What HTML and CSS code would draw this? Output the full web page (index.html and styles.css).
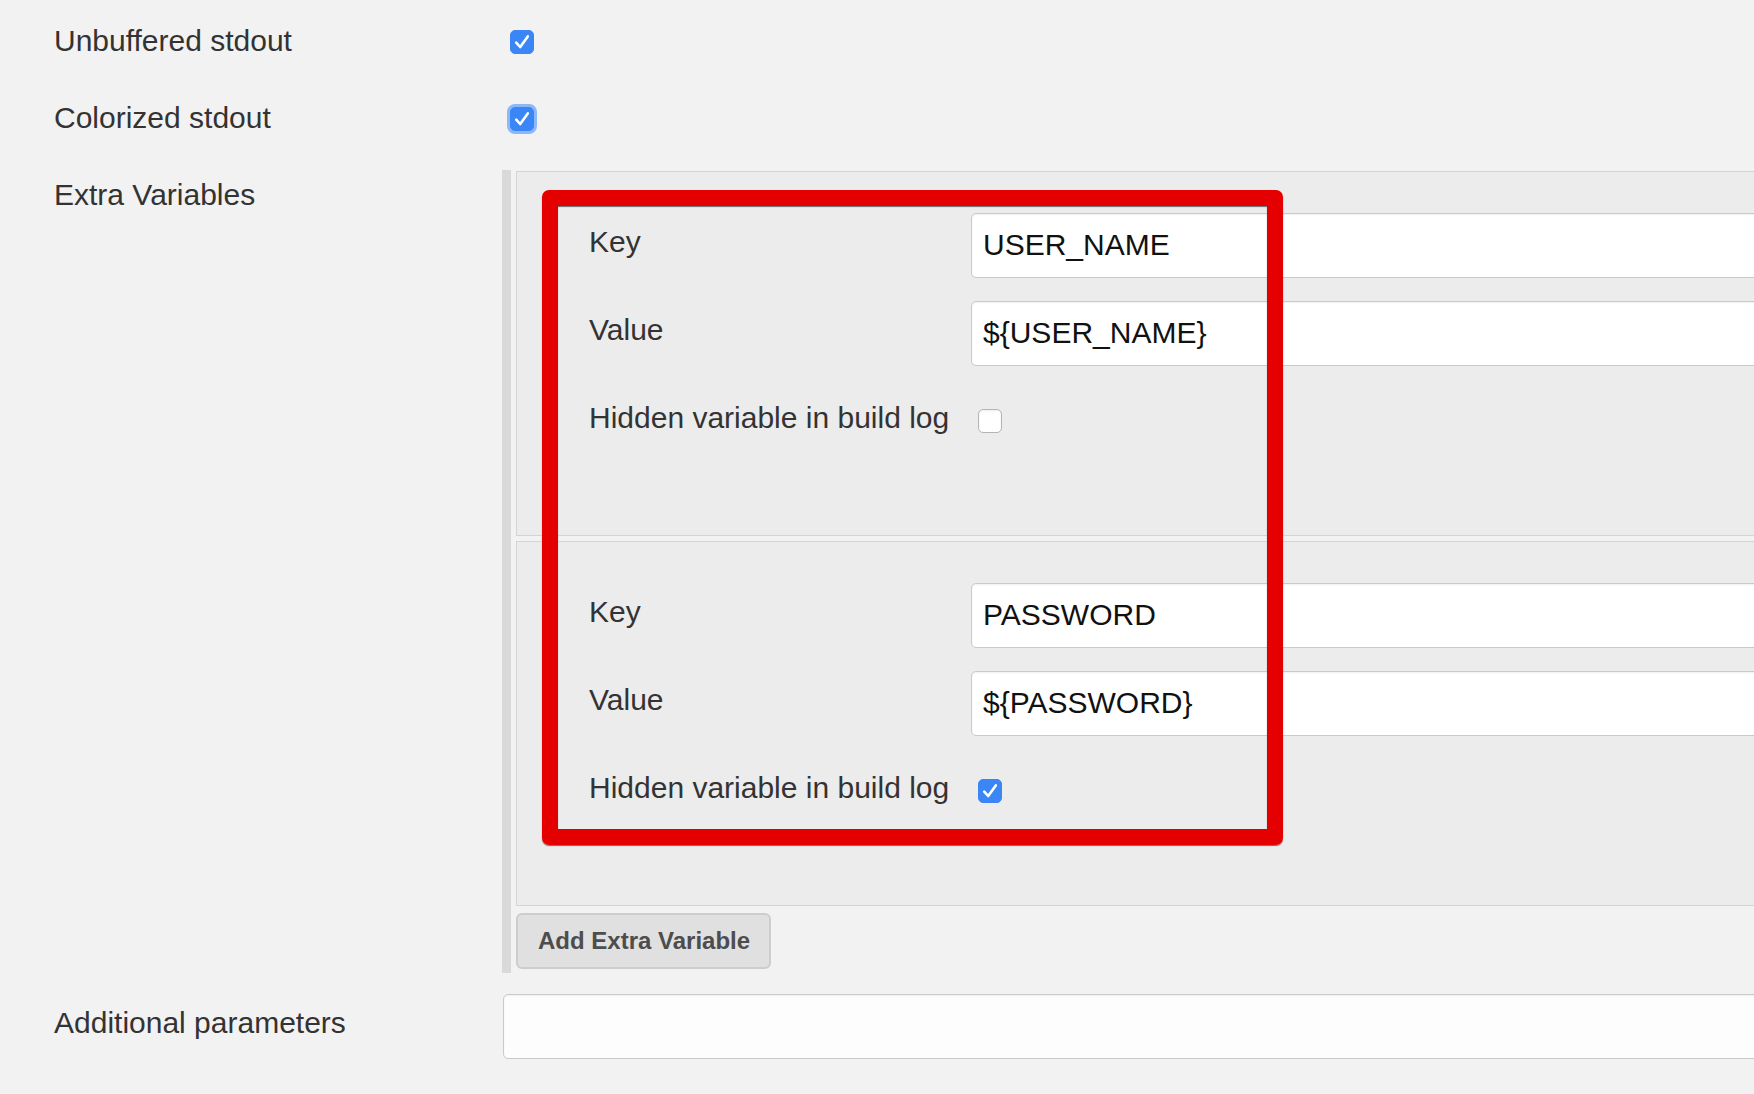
FILE: index.html
```html
<!DOCTYPE html>
<html lang="en">
<head>
<meta charset="utf-8">
<title>Extra Variables</title>
<link rel="stylesheet" href="styles.css">
</head>
<body>
<div class="form">
  <div class="row">
    <div class="label">Unbuffered stdout</div>
    <div class="field">
      <span class="cb checked"><svg viewBox="0 0 24 24" width="24" height="24"><path d="M6.2 12.6 L10.2 17 L17.8 6.4" fill="none" stroke="#fff" stroke-width="2.6" stroke-linecap="round" stroke-linejoin="round"/></svg></span>
    </div>
  </div>
  <div class="row">
    <div class="label">Colorized stdout</div>
    <div class="field">
      <span class="cb checked focused"><svg viewBox="0 0 24 24" width="24" height="24"><path d="M6.2 12.6 L10.2 17 L17.8 6.4" fill="none" stroke="#fff" stroke-width="2.6" stroke-linecap="round" stroke-linejoin="round"/></svg></span>
    </div>
  </div>
  <div class="row extra">
    <div class="label">Extra Variables</div>
    <div class="repeat">
      <div class="bar"></div>
      <div class="repeat-body">
        <div class="item">
          <div class="kv">
            <div class="kv-label">Key</div>
            <div class="input">USER_NAME</div>
          </div>
          <div class="kv">
            <div class="kv-label">Value</div>
            <div class="input">${USER_NAME}</div>
          </div>
          <div class="kv last">
            <div class="kv-label">Hidden variable in build log</div>
            <div class="kv-check"><span class="cb"></span></div>
          </div>
        </div>
        <div class="item">
          <div class="kv">
            <div class="kv-label">Key</div>
            <div class="input">PASSWORD</div>
          </div>
          <div class="kv">
            <div class="kv-label">Value</div>
            <div class="input">${PASSWORD}</div>
          </div>
          <div class="kv last">
            <div class="kv-label">Hidden variable in build log</div>
            <div class="kv-check"><span class="cb checked"><svg viewBox="0 0 24 24" width="24" height="24"><path d="M6.2 12.6 L10.2 17 L17.8 6.4" fill="none" stroke="#fff" stroke-width="2.6" stroke-linecap="round" stroke-linejoin="round"/></svg></span></div>
          </div>
        </div>
        <div class="btn">Add Extra Variable</div>
      </div>
    </div>
  </div>
  <div class="row params">
    <div class="label label-params">Additional parameters</div>
    <div class="input wide"></div>
  </div>
</div>
<div class="highlight"></div>
</body>
</html>
```

FILE: styles.css
```css
html, body {
  margin: 0;
  padding: 0;
  overflow: hidden;
}
body {
  background: #f2f2f2;
  font-family: "Liberation Sans", Arial, sans-serif;
  font-size: 30px;
  color: #333;
  width: 1754px;
  height: 1094px;
  position: relative;
}
.form {
  padding-top: 17px;
}
.row {
  display: flex;
  min-height: 77px;
}
.label {
  box-sizing: border-box;
  flex: 0 0 502px;
  padding: 7px 0 0 54px;
  line-height: 34px;
}
.field {
  padding: 13px 0 0 8px;
}
.cb {
  box-sizing: border-box;
  display: block;
  width: 24px;
  height: 24px;
  border-radius: 5px;
  background: #fff;
  border: 1px solid #b4b4b4;
  box-shadow: inset 0 1px 2px rgba(0,0,0,0.08);
}
.cb svg {
  display: block;
  margin: -1px;
}
.cb.checked {
  background: #3b86f7;
  border-color: #3b86f7;
  box-shadow: none;
}
.cb.focused {
  box-shadow: 0 0 0 3px #8cb8f8;
}
.repeat {
  display: flex;
  flex: 0 0 1400px;
}
.bar {
  flex: 0 0 9px;
  background: #d9d9d9;
  margin-top: -1px;
}
.repeat-body {
  flex: 1;
  margin-left: 5px;
  padding-bottom: 4px;
}
.item {
  background: #ececec;
  border: 1px solid #d4d4d4;
  padding: 41px 0 81px 0;
  margin-bottom: 5px;
}
.kv {
  display: flex;
  height: 65px;
  margin-bottom: 23px;
}
.kv.last {
  margin-bottom: 0;
}
.kv-label {
  box-sizing: border-box;
  flex: 0 0 454px;
  padding: 12px 0 0 72px;
  line-height: 34px;
}
.kv-check {
  padding: 20px 0 0 7px;
}
.input {
  box-sizing: border-box;
  flex: 1;
  height: 65px;
  background: #fff;
  border: 1px solid #cacaca;
  border-radius: 5px;
  box-shadow: inset 0 1px 2px rgba(0,0,0,0.06);
  padding: 0 0 0 11px;
  line-height: 62px;
  color: #111;
  white-space: nowrap;
}
.btn {
  box-sizing: border-box;
  display: inline-block;
  margin-top: 2px;
  width: 255px;
  height: 56px;
  background: #e0e0e0;
  border: 2px solid #cdcdcd;
  border-radius: 6px;
  font-weight: bold;
  font-size: 24px;
  color: #4d4d4d;
  line-height: 52px;
  padding-left: 20px;
  vertical-align: top;
}
.params {
  margin-top: 21px;
}
.label-params {
  padding-top: 12px;
}
.input.wide {
  flex: 0 0 1400px;
  margin-left: 1px;
  background: #fdfdfd;
}
.highlight {
  position: absolute;
  left: 542px;
  top: 190px;
  width: 741px;
  height: 655px;
  box-sizing: border-box;
  border: 16px solid #e40000;
  border-radius: 7px;
  box-shadow: 0 1px 1px rgba(0,0,0,0.55), inset 0 1px 1px rgba(0,0,0,0.55);
}
```
